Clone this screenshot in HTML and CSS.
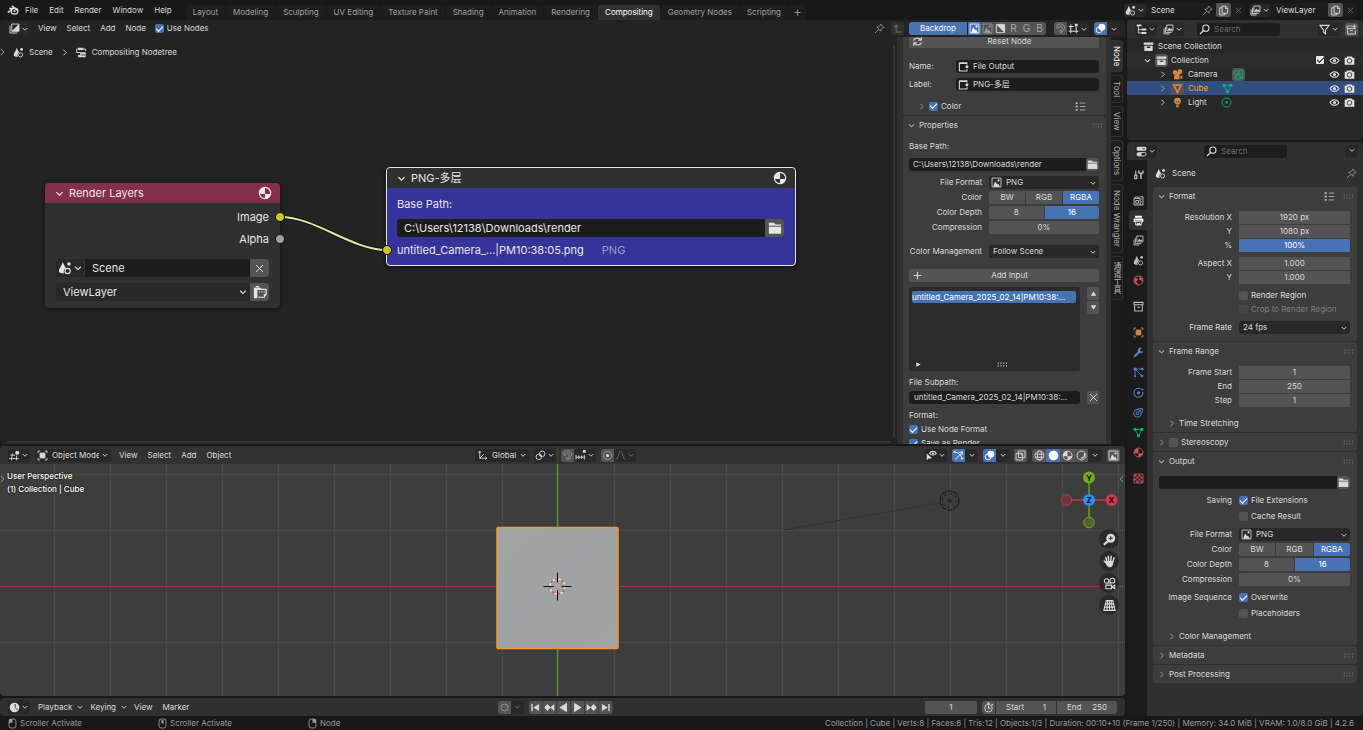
FILE: index.html
```html
<!DOCTYPE html>
<html lang="en">

<head>
    <meta charset="utf-8">
    <meta name="viewport" content="width=device-width,initial-scale=1">
    <title>Blender - Compositing</title>
    <link rel="stylesheet" href="styles.css">
</head>

<body>
    <svg class="sprite" aria-hidden="true">
        <symbol id="blender" viewBox="0 0 16 16"><path d="M1 11.500 8 6H3M6.500 2.500 14 8.500" stroke-width="1.800"/><ellipse cx="10" cy="9.500" rx="4.500" ry="3.800" stroke-width="1.800"/><circle cx="10" cy="9.500" r="1.500" fill="currentColor" stroke="none"/></symbol>
        <symbol id="down" viewBox="0 0 16 16"><path d="m3.500 6 4.500 4.500L12.500 6" stroke-width="1.800"/></symbol>
        <symbol id="right" viewBox="0 0 16 16"><path d="m6 3 5 5-5 5" stroke-width="1.500"/></symbol>
        <symbol id="left" viewBox="0 0 16 16"><path d="M10 3 5 8l5 5"/></symbol>
        <symbol id="plus" viewBox="0 0 16 16"><path d="M8 2.500v11M2.500 8h11" stroke-width="1.500"/></symbol>
        <symbol id="close" viewBox="0 0 16 16"><path d="m3 3 10 10M13 3 3 13" stroke-width="1.400"/></symbol>
        <symbol id="grip" viewBox="0 0 16 16"><path d="M1 6h14M1 10h14" stroke-dasharray="1.500 2.500" stroke-width="1.500"/></symbol>
        <symbol id="compositor" viewBox="0 0 16 16"><path d="M4 1.500h10.500V12H4z"/><path d="M14.500 1.500V12H4z" fill="currentColor" stroke="none"/><path d="M1.500 4v10.500H12"/></symbol>
        <symbol id="scene" viewBox="0 0 16 16"><path d="M5.500 1C4.500 5 1 9 1 11.500c0 2 3 3 6 2.500-1-2-.5-5 2-6C8 6 6.500 4 5.500 1z" fill="currentColor" stroke="none"/><circle cx="11" cy="11.500" r="3"/><circle cx="12.500" cy="3.500" r="2" fill="currentColor" stroke="none"/></symbol>
        <symbol id="nodetree" viewBox="0 0 16 16"><path d="M3 1h8v3.500H3zM6 7.500h8V15H3v-3.500h3z" fill="currentColor" stroke="none"/><path d="M3 3H1v5h5M11 3h3v3"/><path d="M7 11.500h6" class="hole"/></symbol>
        <symbol id="pin" viewBox="0 0 16 16"><path d="m9.500 1.500 5 5-2 .5-2.500 2.500V12L4 6h2.500L9 3.500zM6.500 9.500 1.500 14.500"/></symbol>
        <symbol id="parent" viewBox="0 0 16 16"><path d="M6 3.500V13h7M3 6.500 6 3l3 3.500" stroke-width="1.500"/></symbol>
        <symbol id="copy" viewBox="0 0 16 16"><path d="M6 1.500h5l3 3V12H6zM11 1.500V5h3M6 4H2.500v10.500H10V12"/></symbol>
        <symbol id="layers" viewBox="0 0 16 16"><path d="M5.500 1.500h9v8.500h-9zM3.500 4v8.500h9M1.500 6.500v8h8"/><path d="m6.500 9 2.500-4 2 2.500 1-1.500 2 3z" fill="currentColor" stroke="none"/></symbol>
        <symbol id="outliner" viewBox="0 0 16 16"><path d="M1 2h7M8 8h7M8 13h7" stroke-width="2.800"/><path d="M3.500 3v10H8M3.500 8H8"/></symbol>
        <symbol id="search" viewBox="0 0 16 16"><circle cx="10" cy="6" r="4.500" stroke-width="1.700"/><path d="m6.500 9.500-5 5" stroke-width="1.800"/></symbol>
        <symbol id="filter" viewBox="0 0 16 16"><path d="M1.500 2h13L9.500 8.500v6L6.500 12V8.500z" stroke-width="1.500"/></symbol>
        <symbol id="newcol" viewBox="0 0 16 16"><path d="M9 3H1.500v3.500H14M2.500 6.500v8h11v-5M6 9.500h4M12 .5v6M9 3.500h6"/></symbol>
        <symbol id="box" viewBox="0 0 16 16"><path d="M1 2h14v3.500H1z" fill="currentColor" stroke="none"/><path d="M2 7h12v7.500H2zM5.500 8v2h5V8z" fill="currentColor" fill-rule="evenodd" stroke="none"/></symbol>
        <symbol id="boxline" viewBox="0 0 16 16"><path d="M1.500 2h13v3.500h-13zM2.500 5.500v9h11v-9M6 9h4" stroke-width="1.500"/></symbol>
        <symbol id="eye" viewBox="0 0 16 16"><path d="M1.500 8c3-5.500 10-5.500 13 0-3 5.500-10 5.500-13 0z" stroke-width="1.500"/><circle cx="8" cy="8" r="2.200" fill="currentColor" stroke="none"/></symbol>
        <symbol id="photo" viewBox="0 0 16 16"><path d="M1 4h3V2h8v2h3v10H1z" fill="currentColor" stroke="none"/><circle cx="8" cy="8.500" r="3.300" class="hole"/><circle cx="8" cy="8.500" r="1.500" fill="currentColor" stroke="none"/></symbol>
        <symbol id="movie" viewBox="0 0 16 16"><circle cx="4.500" cy="5" r="3.500" fill="currentColor" stroke="none"/><circle cx="11.500" cy="4" r="3.500" fill="currentColor" stroke="none"/><path d="M3 9h8v6H3zM12 11l3-2v6l-3-2zM4 5h7v5H5z" fill="currentColor" stroke="none"/></symbol>
        <symbol id="movieline" viewBox="0 0 16 16"><circle cx="4.500" cy="5" r="2.800"/><circle cx="11.500" cy="4.500" r="3"/><path d="M6 7.500h4M3.500 10h7v4.500h-7zM11 12l3.500-2v4.500z"/></symbol>
        <symbol id="tri" viewBox="0 0 16 16"><path d="M2.500 3h11L8 13.500z" stroke-width="2.500"/></symbol>
        <symbol id="mesh" viewBox="0 0 16 16"><path d="M3 3.500h10L8 13z" stroke-width="1.400"/><path d="M1 1.500h4v4H1zM11 1.500h4v4h-4zM6 11h4v4H6z" fill="currentColor" stroke="none"/></symbol>
        <symbol id="bulb" viewBox="0 0 16 16"><path d="M8 1a5 5 0 0 0-5 5c0 2 2 3 2.500 5h5c.5-2 2.500-3 2.500-5a5 5 0 0 0-5-5zM6 12h4v3H6z" fill="currentColor" stroke="none"/><path d="m5.500 6 2.500 2 2.500-2" class="hole"/></symbol>
        <symbol id="light" viewBox="0 0 16 16"><circle cx="8" cy="8" r="6.500"/><circle cx="8" cy="8" r="1.800" fill="currentColor" stroke="none"/></symbol>
        <symbol id="outnode" viewBox="0 0 16 16"><path d="M13 5V3H2v11.500h11V12" stroke-width="1.600"/><path d="M2 2h11v2.500H2z" fill="currentColor" stroke="none"/><circle cx="13" cy="8.500" r="2.200" fill="currentColor" stroke="none"/></symbol>
        <symbol id="refresh" viewBox="0 0 16 16"><path d="M2 6.500C4 2 10 1.500 13 5.500M14 9.500c-2 4.500-8 5-11 1M13.500 1.500V6H9M2.500 14.500V10H7" stroke-width="1.500"/></symbol>
        <symbol id="preset" viewBox="0 0 16 16"><path d="M1 3h3M1 8h3M1 13h3" stroke-width="2.600"/><path d="M7 3h8M7 8h8M7 13h8"/></symbol>
        <symbol id="image" viewBox="0 0 16 16"><path d="M1.500 1.500h13v13h-13z" stroke-width="1.200"/><path d="m3 14 3-8 3 5 1-2 3 5z" fill="currentColor" stroke="none"/><circle cx="11" cy="5" r="1.600" fill="currentColor" stroke="none"/></symbol>
        <symbol id="folder" viewBox="0 0 16 16"><path d="M1 2h6l1.500 2H15v1.500H1zM1 6.500h14v8H1z" fill="currentColor" stroke="none"/></symbol>
        <symbol id="ball" viewBox="0 0 16 16"><circle cx="8" cy="8" r="6.500"/><path d="M8 1.500V9H3C1.500 9 1.500 8 1.500 8A6.500 6.500 0 0 1 8 1.500zM8 9h6.400A6.500 6.500 0 0 1 8 14.500z" fill="currentColor" stroke="none"/></symbol>
        <symbol id="tools" viewBox="0 0 16 16"><path d="M4 2v7M2.500 9h3v5h-3z" stroke-width="1.700"/><path d="M8.500 2v3l3 2.500 3-2.500V2M11.500 7v7.500" stroke-width="2.200"/></symbol>
        <symbol id="render" viewBox="0 0 16 16"><path d="M1.500 5h9v9.500h-9zM3 5V3h6v2M10.500 2.500h4v12h-4M4 8h4v4H4zM12 5v1.500M12 9v1.500" stroke-width="1.400"/></symbol>
        <symbol id="printer" viewBox="0 0 16 16"><path d="M3 1h10v3H3zM1 5h14v5h-2V8H3v2H1z" fill="currentColor" stroke="none"/><path d="M4 9h8v5.500H4z"/><path d="m5 14 2-3 1.500 1.500L10 11l1.500 3z" fill="currentColor" stroke="none"/></symbol>
        <symbol id="world" viewBox="0 0 16 16"><circle cx="8" cy="8" r="6.500" stroke-width="1.500"/><path d="M3 4c2 1 3 0 4 2s-3 2-2 4 3 1 3 4c-3 0-6-3-6-6zM9 3c2 0 5 2 5 5-2 2-3-1-5-1z" fill="currentColor" stroke="none"/></symbol>
        <symbol id="object" viewBox="0 0 16 16"><path d="M4.500 4.500h7v7h-7z" fill="currentColor"/><path d="M1.500 4.500v-3h3M11.500 1.500h3v3M14.500 11.500v3h-3M4.500 14.500h-3v-3"/></symbol>
        <symbol id="wrench" viewBox="0 0 16 16"><path d="m2.500 13.500 6-6" stroke-width="3" stroke-linecap="round"/><path d="M13 1.500A4 4 0 1 0 14.800 6L12 6.500 9.800 4.500z" fill="currentColor" stroke="none"/></symbol>
        <symbol id="particles" viewBox="0 0 16 16"><path d="M3 3v11M3 3h11M3 3l10 10"/><path d="M1 1h4v4H1z" fill="currentColor" stroke="none"/><circle cx="13.500" cy="3" r="1.500" fill="currentColor"/><circle cx="13" cy="13" r="1.500" fill="currentColor"/><circle cx="3" cy="13.500" r="1" fill="currentColor"/></symbol>
        <symbol id="physics" viewBox="0 0 16 16"><path d="M11 2.700A6.500 6.500 0 1 0 14.200 7" stroke-width="1.500"/><circle cx="8" cy="8.500" r="2.300" fill="currentColor" stroke="none"/><circle cx="13.500" cy="3.500" r="1.500" fill="currentColor" stroke="none"/></symbol>
        <symbol id="constraint" viewBox="0 0 16 16"><circle cx="6.500" cy="9" r="5.500" stroke-width="1.500"/><circle cx="6.500" cy="9" r="2" stroke-width="1.500"/><path d="M5.500 3.500C9 2.500 11 2 14 2c.5 4-1 7-3 9.500M12 3l-3 4"/></symbol>
        <symbol id="checker" viewBox="0 0 16 16"><path d="M1.500 1.500h13v13h-13z"/><path d="M2 2h3v3H2zM8 2h3v3H8zM5 5h3v3H5zM11 5h3v3h-3zM2 8h3v3H2zM8 8h3v3H8zM5 11h3v3H5zM11 11h3v3h-3z" fill="currentColor" stroke="none"/></symbol>
        <symbol id="props" viewBox="0 0 16 16"><rect x="1" y="1" width="14" height="6" rx="2" fill="currentColor" stroke="none"/><rect x="1.500" y="9.500" width="13" height="5" rx="2"/><path d="M9 4h4" class="hole"/><path d="M2 10h6v4H2z" fill="currentColor" stroke="none"/></symbol>
        <symbol id="view3d" viewBox="0 0 16 16"><path d="M2 7.500h7M0 12.500h14M5 5 3.500 15M11 8v7"/><circle cx="12" cy="4" r="3" fill="currentColor" stroke="none"/></symbol>
        <symbol id="axes" viewBox="0 0 16 16"><path d="M4 2v10h10M4 12l6-6M2 4l2-2.500L6 4M12 10l2.500 2-2.500 2"/></symbol>
        <symbol id="pivot" viewBox="0 0 16 16"><circle cx="5.500" cy="10" r="4"/><circle cx="10.500" cy="5.500" r="4"/><circle cx="8" cy="8" r="1.500" fill="currentColor" stroke="none"/></symbol>
        <symbol id="magnet" viewBox="0 0 16 16"><path d="M3 8 2 5C4 0 13 0 14 6c0 4-3 7-6 8.500l-2-2.500c3-1 5-3 4.500-5.500C10 4 7 4 6 6l-1.500 2zM3.500 5l2 1.500M8 10.500l2 2.500" stroke-width="1.200"/></symbol>
        <symbol id="increment" viewBox="0 0 16 16"><path d="M1 10.500h14M1.500 7v7M5.500 8v5M9.500 8v5M13.500 7v7"/><path d="M11.500 0h4v4h-4z" fill="currentColor" stroke="none"/></symbol>
        <symbol id="snapgrid" viewBox="0 0 16 16"><path d="M4 2v13M12 6v9M1 5h7M1 12h14" stroke-width="1.500"/><path d="M10 1h4v4h-4z" fill="currentColor" stroke="none"/></symbol>
        <symbol id="prop" viewBox="0 0 16 16"><circle cx="8" cy="8" r="6" opacity=".5"/><circle cx="8" cy="8" r="2.200" fill="currentColor" stroke="none"/></symbol>
        <symbol id="falloff" viewBox="0 0 16 16"><path d="M1 14c4-1 4-12 7-12s3 11 7 12"/></symbol>
        <symbol id="visible" viewBox="0 0 16 16"><path d="M5 5c2-4 8-4 10 0-2 3-8 3-10 0z" stroke-width="1.500"/><circle cx="10" cy="5" r="1.500" fill="currentColor" stroke="none"/><path d="M1 5v10l3-2.500 5-.5z" fill="currentColor" stroke="none"/></symbol>
        <symbol id="gizmo" viewBox="0 0 16 16"><path d="M1 3c7 0 11 4 12 11M3 14 13 4M9 3.500l5-1-1 5M1 3l3-2M13 14l2-3"/></symbol>
        <symbol id="overlay" viewBox="0 0 16 16"><circle cx="10" cy="6" r="5" fill="currentColor" stroke="none"/><circle cx="6" cy="10" r="4.300"/><path d="M5.500 8.500a4 4 0 0 0 3 4" stroke="#4772b3"/></symbol>
        <symbol id="xray" viewBox="0 0 16 16"><path d="M5 1.500h9.500V11H5zM1.500 5H11v9.500H1.500zM8 7h4"/></symbol>
        <symbol id="wire" viewBox="0 0 16 16"><circle cx="8" cy="8" r="6.500"/><ellipse cx="8" cy="8" rx="3" ry="6.500"/><path d="M2 6h12M2 10.500h12"/></symbol>
        <symbol id="solid" viewBox="0 0 16 16"><circle cx="8" cy="8" r="7" fill="currentColor" stroke="none"/></symbol>
        <symbol id="rendered" viewBox="0 0 16 16"><circle cx="8" cy="8" r="6.500"/><path d="M12 5c2 4-1 7-5 7" stroke-width="1.800"/></symbol>
        <symbol id="halftone" viewBox="0 0 16 16"><path d="M2 2h12v12H2z"/><path d="M2 2h12v12z" fill="currentColor" stroke="none"/></symbol>
        <symbol id="zoomin" viewBox="0 0 16 16"><circle cx="9.500" cy="6.500" r="5.500" fill="currentColor" stroke="none"/><path d="m6 10-5 4.500" stroke-width="2.600"/><path d="M9.500 4v5M7 6.500h5" class="hole"/></symbol>
        <symbol id="hand" viewBox="0 0 16 16"><path d="M4.500 8 3.500 3M7 7.500 6.500 1.500M9.500 7.500l.5-6M12 8.500l1.500-5M4.500 10 1.500 7.500" stroke-width="1.800" stroke-linecap="round"/><path d="M3.500 7.500h9V11c-.5 2.500-2 4-4 4-2.500 0-4-2-5-4z" fill="currentColor" stroke="none"/></symbol>
        <symbol id="persp" viewBox="0 0 16 16"><path d="M4 2h8l3 12H1zM8 2v12M6 2 4.500 14M10 2l1.500 12M3 6h10M2 10h12" stroke-width="1.300"/></symbol>
        <symbol id="clock" viewBox="0 0 16 16"><circle cx="8" cy="8" r="7" fill="currentColor" stroke="none"/><path d="M9 3v5l3 3.500" class="hole"/></symbol>
        <symbol id="record" viewBox="0 0 16 16"><circle cx="8" cy="8" r="5"/></symbol>
        <symbol id="tostart" viewBox="0 0 16 16"><path d="M2 3h2v10H2zM13 3v10L5 8z" fill="currentColor" stroke="none"/></symbol>
        <symbol id="prevkey" viewBox="0 0 16 16"><path d="m5 3 4.500 5L5 13 .5 8zM15 3v10L9 8z" fill="currentColor" stroke="none"/></symbol>
        <symbol id="playback" viewBox="0 0 16 16"><path d="M13 1v14L2 8z" fill="currentColor" stroke="none"/></symbol>
        <symbol id="play" viewBox="0 0 16 16"><path d="M3 1v14l11-7z" fill="currentColor" stroke="none"/></symbol>
        <symbol id="nextkey" viewBox="0 0 16 16"><path d="m11 3 4.500 5L11 13 6.500 8zM1 3v10l6-5z" fill="currentColor" stroke="none"/></symbol>
        <symbol id="toend" viewBox="0 0 16 16"><path d="M12 3h2v10h-2zM3 3v10l8-5z" fill="currentColor" stroke="none"/></symbol>
        <symbol id="stopwatch" viewBox="0 0 16 16"><circle cx="8" cy="9" r="5.500"/><path d="M8 5.500V9h3M6 1.500h4M8 1.500v2M13 3l1.500 1.500" stroke-width="1.500"/></symbol>
        <symbol id="mousel" viewBox="0 0 16 16"><rect x="3" y="1.500" width="10" height="13" rx="3"/><path d="M3 1.500h5V7H3z" fill="currentColor" stroke="none"/></symbol>
        <symbol id="mousem" viewBox="0 0 16 16"><rect x="3" y="1.500" width="10" height="13" rx="3"/><path d="M6.500 3h3v5h-3z" fill="currentColor" stroke="none"/></symbol>
        <symbol id="mouser" viewBox="0 0 16 16"><rect x="3" y="1.500" width="10" height="13" rx="3"/><path d="M8 1.500h5V7H8z" fill="currentColor" stroke="none"/></symbol>
        <symbol id="rerender" viewBox="0 0 16 16"><path d="M1 4h4v11H1zM3 1h4v1.500H3zM1 3h8v1.500H1z" fill="currentColor" stroke="none"/><path d="M5 5h10v6l-2 1.500V14H6M13 14v-3h2"/><path d="M7 8h7" stroke-dasharray="1 1"/></symbol>
        <symbol id="triup" viewBox="0 0 16 16"><path d="M8 4l5 8H3z" fill="currentColor" stroke="none"/></symbol>
        <symbol id="tridown" viewBox="0 0 16 16"><path d="M8 12 3 4h10z" fill="currentColor" stroke="none"/></symbol>
        <symbol id="triright" viewBox="0 0 16 16"><path d="M4 4v8l8-4z" fill="currentColor" stroke="none"/></symbol>
    </svg>

    <header class="topbar">
        <svg class="icon logo"><use href="#blender"/></svg>
        <nav class="menus">
            <button>File</button><button>Edit</button><button>Render</button><button>Window</button><button>Help</button>
        </nav>
        <nav class="workspaces">
            <button>Layout</button><button>Modeling</button><button>Sculpting</button><button>UV Editing</button><button>Texture Paint</button><button>Shading</button><button>Animation</button><button>Rendering</button><button class="active">Compositing</button><button>Geometry Nodes</button><button>Scripting</button><button class="add" aria-label="Add workspace"><svg class="icon small"><use href="#plus"/></svg></button>
        </nav>
        <div class="datablock">
            <button class="type" aria-label="Browse scene"><svg class="icon"><use href="#scene"/></svg><svg class="icon chev"><use href="#down"/></svg></button>
            <input class="scene-name" type="text" value="Scene" aria-label="Scene name">
            <svg class="icon dim"><use href="#pin"/></svg>
            <button class="raised" aria-label="New scene"><svg class="icon"><use href="#copy"/></svg></button>
            <button class="off" aria-label="Remove scene"><svg class="icon small"><use href="#close"/></svg></button>
        </div>
        <div class="datablock">
            <button class="type" aria-label="Browse view layer"><svg class="icon"><use href="#layers"/></svg><svg class="icon chev"><use href="#down"/></svg></button>
            <input class="layer-name" type="text" value="ViewLayer" aria-label="View layer name">
            <button class="raised" aria-label="New view layer"><svg class="icon"><use href="#copy"/></svg></button>
            <button class="off" aria-label="Remove view layer"><svg class="icon small"><use href="#close"/></svg></button>
        </div>
    </header>

    <main class="screen">
        <div class="left">

            <!-- compositor -->
            <section class="area node-editor">
                <div class="header">
                    <button class="type" aria-label="Editor type"><svg class="icon"><use href="#compositor"/></svg><svg class="icon chev"><use href="#down"/></svg></button>
                    <nav class="menus"><button>View</button><button>Select</button><button>Add</button><button>Node</button></nav>
                    <label class="check"><input type="checkbox" checked>Use Nodes</label>
                    <span class="fill"></span>
                    <svg class="icon dim pin"><use href="#pin"/></svg>
                    <button class="raised off" aria-label="Parent node tree"><svg class="icon"><use href="#parent"/></svg></button>
                    <div class="joined channels">
                        <button class="on backdrop">Backdrop</button>
                        <button class="on" aria-label="Color and alpha"><svg class="icon"><use href="#image"/></svg></button>
                        <button class="dim" aria-label="Color"><svg class="icon"><use href="#image"/></svg></button>
                        <button aria-label="Alpha"><svg class="icon"><use href="#halftone"/></svg></button>
                        <button class="channel">R</button><button class="channel">G</button><button class="channel">B</button>
                    </div>
                    <div class="joined">
                        <button class="dim" aria-label="Snap"><svg class="icon"><use href="#magnet"/></svg></button>
                        <button class="type" aria-label="Snap to"><svg class="icon"><use href="#snapgrid"/></svg><svg class="icon chev"><use href="#down"/></svg></button>
                    </div>
                    <div class="joined">
                        <button class="on" aria-label="Overlays"><svg class="icon"><use href="#overlay"/></svg></button>
                        <button class="flat" aria-label="Overlay options"><svg class="icon chev"><use href="#down"/></svg></button>
                    </div>
                </div>
                <div class="node-body">
                    <div class="canvas">
                        <svg class="icon region-open"><use href="#right"/></svg>
                        <div class="crumbs">
                            <svg class="icon"><use href="#scene"/></svg>Scene
                            <svg class="icon small"><use href="#right"/></svg>
                            <svg class="icon"><use href="#nodetree"/></svg>Compositing Nodetree
                        </div>
                        <article class="node render-layers">
                            <h2><svg class="icon"><use href="#down"/></svg>Render Layers<svg class="icon big"><use href="#ball"/></svg></h2>
                            <p class="socket out">Image</p>
                            <p class="socket out">Alpha</p>
                            <div class="node-fields">
                                <div class="field">
                                    <button class="type" aria-label="Browse scene"><svg class="icon big"><use href="#scene"/></svg><svg class="icon chev"><use href="#down"/></svg></button>
                                    <input type="text" value="Scene" aria-label="Scene">
                                    <button class="raised" aria-label="Unlink"><svg class="icon"><use href="#close"/></svg></button>
                                </div>
                                <div class="field dark">
                                    <select aria-label="Layer"><option>ViewLayer</option></select>
                                    <svg class="icon chev"><use href="#down"/></svg>
                                    <button class="raised" aria-label="Render layer"><svg class="icon big"><use href="#rerender"/></svg></button>
                                </div>
                            </div>
                        </article>
                        <article class="node file-output">
                            <h2><svg class="icon"><use href="#down"/></svg>PNG-多层<svg class="icon big"><use href="#ball"/></svg></h2>
                            <label for="node-path">Base Path:</label>
                            <div class="field">
                                <input id="node-path" type="text" value="C:\Users\12138\Downloads\render">
                                <button class="raised" aria-label="Browse"><svg class="icon big"><use href="#folder"/></svg></button>
                            </div>
                            <p class="socket in">untitled_Camera_...|PM10:38:05.png<span>PNG</span></p>
                        </article>
                        <svg class="links" width="1" height="1">
                            <path d="M280 180C316 180 351 213 387 213" class="link-edge"/>
                            <path d="M280 180C316 180 351 213 387 213" class="link"/>
                            <circle cx="280" cy="180" r="4.500" class="color"/>
                            <circle cx="280" cy="202" r="4.500" class="value"/>
                            <circle cx="387" cy="213" r="4.500" class="color"/>
                        </svg>
                        <span class="scroll-x"></span>
                        <span class="scroll-y"></span>
                    </div>
                    <aside class="sidebar">
                        <div class="panel scrolled">
                            <div class="body">
                                <button class="wide"><svg class="icon"><use href="#refresh"/></svg>Reset Node</button>
                                <div class="row name"><label for="n-name">Name:</label><span class="field"><svg class="icon"><use href="#outnode"/></svg><input id="n-name" type="text" value="File Output"></span></div>
                                <div class="row name"><label for="n-label">Label:</label><span class="field"><svg class="icon"><use href="#outnode"/></svg><input id="n-label" type="text" value="PNG-多层"></span></div>
                            </div>
                            <div class="sub"><svg class="icon small"><use href="#right"/></svg><label class="check"><input type="checkbox" checked>Color</label><svg class="icon tail"><use href="#preset"/></svg></div>
                        </div>
                        <div class="panel">
                            <h3><svg class="icon small"><use href="#down"/></svg>Properties<svg class="icon grip"><use href="#grip"/></svg></h3>
                            <div class="body">
                                <label class="line" for="s-path">Base Path:</label>
                                <div class="field"><input id="s-path" type="text" value="C:\Users\12138\Downloads\render"><button class="raised" aria-label="Browse"><svg class="icon"><use href="#folder"/></svg></button></div>
                                <div class="group">
                                    <div class="row"><label for="s-format">File Format</label><span class="field dark"><svg class="icon"><use href="#image"/></svg><select id="s-format"><option>PNG</option></select><svg class="icon chev"><use href="#down"/></svg></span></div>
                                    <div class="row"><span>Color</span><span class="seg"><label><input type="radio" name="s-color">BW</label><label><input type="radio" name="s-color">RGB</label><label><input type="radio" name="s-color" checked>RGBA</label></span></div>
                                    <div class="row"><span>Color Depth</span><span class="seg"><label><input type="radio" name="s-depth">8</label><label><input type="radio" name="s-depth" checked>16</label></span></div>
                                    <div class="row"><label for="s-comp">Compression</label><input id="s-comp" class="num" type="text" value="0%"></div>
                                </div>
                                <div class="row break"><label for="s-cm">Color Management</label><span class="field dark"><select id="s-cm"><option>Follow Scene</option></select><svg class="icon chev"><use href="#down"/></svg></span></div>
                                <button class="wide break"><svg class="icon"><use href="#plus"/></svg>Add Input</button>
                                <div class="slots">
                                    <div class="list">
                                        <button class="item">untitled_Camera_2025_02_14|PM10:38:...</button>
                                        <div class="list-foot"><svg class="icon small"><use href="#triright"/></svg><svg class="icon"><use href="#grip"/></svg></div>
                                    </div>
                                    <div class="movers"><button aria-label="Move up"><svg class="icon"><use href="#triup"/></svg></button><button aria-label="Move down"><svg class="icon"><use href="#tridown"/></svg></button></div>
                                </div>
                                <div class="group">
                                    <label class="line" for="s-sub">File Subpath:</label>
                                    <div class="split"><input id="s-sub" class="text" type="text" value="untitled_Camera_2025_02_14|PM10:38:..."><button class="raised" aria-label="Remove input"><svg class="icon"><use href="#close"/></svg></button></div>
                                </div>
                                <div class="group tight">
                                    <span class="line">Format:</span>
                                    <label class="check"><input type="checkbox" checked>Use Node Format</label>
                                    <label class="check"><input type="checkbox" checked>Save as Render</label>
                                </div>
                            </div>
                        </div>
                    </aside>
                    <nav class="side-tabs">
                        <button class="active">Node</button><button>Tool</button><button>View</button><button>Options</button><button>Node Wrangler</button><button>通道工具</button>
                    </nav>
                </div>
            </section>

            <!-- 3D viewport -->
            <section class="area viewport">
                <svg class="world" viewBox="0 0 1125 250" preserveAspectRatio="xMidYMid slice">
                    <defs>
                        <pattern id="grid" x="54" y="28" width="56" height="56" patternUnits="userSpaceOnUse"><path d="M0 .5h56M.5 0v56" stroke="#494949"/></pattern>
                        <linearGradient id="face" x1="0" y1="0" x2="1" y2="1"><stop offset="0" stop-color="#a3a5a5"/><stop offset=".5" stop-color="#9fa2a2"/><stop offset="1" stop-color="#a3a4a4"/></linearGradient>
                    </defs>
                    <rect width="1125" height="250" fill="#3d3d3d"/>
                    <rect width="1125" height="250" fill="url(#grid)"/>
                    <path d="M0 140.500h1125" stroke="#9b3347"/>
                    <path d="M557.500 0v250" stroke="#5d8a26" stroke-width="1.500"/>
                    <rect x="497" y="81.500" width="121" height="121" rx="1" fill="url(#face)" stroke="#f5962d" stroke-width="1.500"/>
                    <circle cx="557.500" cy="140.500" r="7.500" class="cursor-white"/>
                    <circle cx="557.500" cy="140.500" r="7.500" class="cursor-red"/>
                    <path d="M557.500 126.500v10M557.500 144.500v10M543.500 140.500h10M561.500 140.500h10" stroke="#111"/>
                    <circle cx="557.500" cy="140.500" r="1.500" fill="#f7a23b"/>
                    <g fill="none" stroke="#151515">
                        <circle cx="949.500" cy="54.500" r="9.500" stroke-dasharray="5 1"/>
                        <circle cx="949.500" cy="54.500" r="7" stroke-dasharray="2 3.500"/>
                        <circle cx="949.500" cy="54.500" r="1.500"/>
                        <path d="m939 57-155 27" stroke="#333"/>
                    </g>
                </svg>
                <div class="header">
                    <div class="start">
                        <button class="type" aria-label="Editor type"><svg class="icon"><use href="#view3d"/></svg><svg class="icon chev"><use href="#down"/></svg></button>
                        <span class="field dark mode"><svg class="icon"><use href="#object"/></svg><select aria-label="Mode"><option>Object Mode</option></select><svg class="icon chev"><use href="#down"/></svg></span>
                        <nav class="menus"><button>View</button><button>Select</button><button>Add</button><button>Object</button></nav>
                    </div>
                    <span class="field dark orient"><svg class="icon"><use href="#axes"/></svg><select aria-label="Orientation"><option>Global</option></select><svg class="icon chev"><use href="#down"/></svg></span>
                    <button class="type" aria-label="Pivot point"><svg class="icon"><use href="#pivot"/></svg><svg class="icon chev"><use href="#down"/></svg></button>
                    <div class="joined">
                        <button class="dim" aria-label="Snap"><svg class="icon"><use href="#magnet"/></svg></button>
                        <button class="type" aria-label="Snap to"><svg class="icon"><use href="#increment"/></svg><svg class="icon chev"><use href="#down"/></svg></button>
                    </div>
                    <div class="joined">
                        <button aria-label="Proportional editing"><svg class="icon"><use href="#prop"/></svg></button>
                        <button class="type off" aria-label="Falloff"><svg class="icon"><use href="#falloff"/></svg><svg class="icon chev"><use href="#down"/></svg></button>
                    </div>
                    <span class="fill"></span>
                    <button class="type" aria-label="Object types"><svg class="icon"><use href="#visible"/></svg><svg class="icon chev"><use href="#down"/></svg></button>
                    <div class="joined">
                        <button class="on" aria-label="Gizmos"><svg class="icon"><use href="#gizmo"/></svg></button>
                        <button class="flat" aria-label="Gizmo options"><svg class="icon chev"><use href="#down"/></svg></button>
                    </div>
                    <div class="joined">
                        <button class="on" aria-label="Overlays"><svg class="icon"><use href="#overlay"/></svg></button>
                        <button class="flat" aria-label="Overlay options"><svg class="icon chev"><use href="#down"/></svg></button>
                    </div>
                    <button class="raised" aria-label="X-ray"><svg class="icon"><use href="#xray"/></svg></button>
                    <div class="joined shading">
                        <button aria-label="Wireframe"><svg class="icon"><use href="#wire"/></svg></button>
                        <button class="on" aria-label="Solid"><svg class="icon"><use href="#solid"/></svg></button>
                        <button aria-label="Material preview"><svg class="icon"><use href="#ball"/></svg></button>
                        <button aria-label="Rendered"><svg class="icon"><use href="#rendered"/></svg></button>
                        <button class="flat" aria-label="Shading options"><svg class="icon chev"><use href="#down"/></svg></button>
                    </div>
                    <button class="raised" aria-label="Render preview"><svg class="icon"><use href="#image"/></svg></button>
                </div>
                <svg class="icon region-open"><use href="#right"/></svg>
                <svg class="icon region-close"><use href="#left"/></svg>
                <p class="stats">User Perspective<br>(1) Collection | Cube</p>
                <svg class="nav-gizmo" viewBox="0 0 60 60">
                    <path d="M7 30h46" stroke="#c9354d" stroke-width="1.500"/>
                    <path d="M30 7v46" stroke="#6d9f1d" stroke-width="1.500"/>
                    <circle cx="7.500" cy="30" r="5.300" fill="#6c3640" stroke="#c9354d"/>
                    <circle cx="30" cy="52.500" r="5.300" fill="#4e632a" stroke="#72a51e"/>
                    <circle cx="52.500" cy="30" r="6" fill="#d2374f"/>
                    <circle cx="30" cy="7.500" r="6" fill="#73aa17"/>
                    <circle cx="30" cy="30" r="6" fill="#2c8ff5"/>
                    <text x="52.500" y="33">X</text>
                    <text x="30" y="10.500">Y</text>
                    <text x="30" y="33">Z</text>
                </svg>
                <div class="nav-buttons">
                    <button aria-label="Zoom"><svg class="icon"><use href="#zoomin"/></svg></button>
                    <button aria-label="Pan"><svg class="icon"><use href="#hand"/></svg></button>
                    <button aria-label="Camera view"><svg class="icon"><use href="#movieline"/></svg></button>
                    <button aria-label="Perspective"><svg class="icon"><use href="#persp"/></svg></button>
                </div>
            </section>

            <section class="area timeline">
                <div class="header">
                    <div class="start">
                        <button class="type" aria-label="Editor type"><svg class="icon"><use href="#clock"/></svg><svg class="icon chev"><use href="#down"/></svg></button>
                        <nav class="menus"><button>Playback<svg class="icon chev"><use href="#down"/></svg></button><button>Keying<svg class="icon chev"><use href="#down"/></svg></button><button>View</button><button>Marker</button></nav>
                    </div>
                    <div class="joined">
                        <button class="dim" aria-label="Auto keying"><svg class="icon"><use href="#record"/></svg></button>
                        <button class="flat off" aria-label="Auto keying options"><svg class="icon chev"><use href="#down"/></svg></button>
                    </div>
                    <div class="joined transport">
                        <button aria-label="Jump to start"><svg class="icon"><use href="#tostart"/></svg></button>
                        <button aria-label="Previous keyframe"><svg class="icon"><use href="#prevkey"/></svg></button>
                        <button aria-label="Play reversed"><svg class="icon"><use href="#playback"/></svg></button>
                        <button aria-label="Play"><svg class="icon"><use href="#play"/></svg></button>
                        <button aria-label="Next keyframe"><svg class="icon"><use href="#nextkey"/></svg></button>
                        <button aria-label="Jump to end"><svg class="icon"><use href="#toend"/></svg></button>
                    </div>
                    <span class="fill"></span>
                    <input class="num frame" type="text" value="1" aria-label="Current frame">
                    <div class="joined">
                        <button aria-label="Preview range"><svg class="icon"><use href="#stopwatch"/></svg></button>
                        <label class="range">Start<input type="text" value="1"></label>
                        <label class="range">End<input type="text" value="250"></label>
                    </div>
                </div>
            </section>
        </div>

        <div class="right">
            <section class="area outliner">
                <div class="header">
                    <button class="type" aria-label="Editor type"><svg class="icon"><use href="#outliner"/></svg><svg class="icon chev"><use href="#down"/></svg></button>
                    <button class="type" aria-label="Display mode"><svg class="icon"><use href="#layers"/></svg><svg class="icon chev"><use href="#down"/></svg></button>
                    <label class="search"><svg class="icon"><use href="#search"/></svg><input type="text" placeholder="Search" aria-label="Search outliner"></label>
                    <span class="fill"></span>
                    <button class="type" aria-label="Filter"><svg class="icon"><use href="#filter"/></svg><svg class="icon chev"><use href="#down"/></svg></button>
                    <button class="raised" aria-label="New collection"><svg class="icon"><use href="#newcol"/></svg></button>
                </div>
                <ul class="tree">
                    <li class="root"><svg class="icon"><use href="#box"/></svg>Scene Collection</li>
                    <li class="branch"><svg class="icon small"><use href="#down"/></svg><svg class="icon lit"><use href="#box"/></svg>Collection
                        <span class="toggles"><input class="mark" type="checkbox" checked aria-label="Enable collection"><svg class="icon"><use href="#eye"/></svg><svg class="icon"><use href="#photo"/></svg></span></li>
                    <li class="leaf"><svg class="icon small"><use href="#right"/></svg><svg class="icon orange"><use href="#movie"/></svg>Camera<svg class="icon green data lit"><use href="#movieline"/></svg>
                        <span class="toggles"><svg class="icon"><use href="#eye"/></svg><svg class="icon"><use href="#photo"/></svg></span></li>
                    <li class="leaf selected"><svg class="icon small"><use href="#right"/></svg><svg class="icon orange lit"><use href="#tri"/></svg>Cube<svg class="icon green data"><use href="#mesh"/></svg>
                        <span class="toggles"><svg class="icon"><use href="#eye"/></svg><svg class="icon"><use href="#photo"/></svg></span></li>
                    <li class="leaf"><svg class="icon small"><use href="#right"/></svg><svg class="icon orange"><use href="#bulb"/></svg>Light<svg class="icon green data"><use href="#light"/></svg>
                        <span class="toggles"><svg class="icon"><use href="#eye"/></svg><svg class="icon"><use href="#photo"/></svg></span></li>
                </ul>
            </section>

            <section class="area properties">
                <div class="header">
                    <button class="type" aria-label="Editor type"><svg class="icon"><use href="#props"/></svg><svg class="icon chev"><use href="#down"/></svg></button>
                    <label class="search"><svg class="icon"><use href="#search"/></svg><input type="text" placeholder="Search" aria-label="Search properties"></label>
                    <button class="flat" aria-label="Options"><svg class="icon chev"><use href="#down"/></svg></button>
                </div>
                <div class="props-body">
                    <nav class="prop-tabs">
                        <button aria-label="Tool"><svg class="icon"><use href="#tools"/></svg></button>
                        <button class="apart" aria-label="Render"><svg class="icon"><use href="#render"/></svg></button>
                        <button class="active" aria-label="Output"><svg class="icon"><use href="#printer"/></svg></button>
                        <button aria-label="View layer"><svg class="icon"><use href="#layers"/></svg></button>
                        <button aria-label="Scene"><svg class="icon"><use href="#scene"/></svg></button>
                        <button class="red" aria-label="World"><svg class="icon"><use href="#world"/></svg></button>
                        <button class="apart" aria-label="Collection"><svg class="icon"><use href="#boxline"/></svg></button>
                        <button class="apart orange" aria-label="Object"><svg class="icon"><use href="#object"/></svg></button>
                        <button class="blue" aria-label="Modifiers"><svg class="icon"><use href="#wrench"/></svg></button>
                        <button class="blue" aria-label="Particles"><svg class="icon"><use href="#particles"/></svg></button>
                        <button class="blue" aria-label="Physics"><svg class="icon"><use href="#physics"/></svg></button>
                        <button class="blue" aria-label="Constraints"><svg class="icon"><use href="#constraint"/></svg></button>
                        <button class="green" aria-label="Data"><svg class="icon"><use href="#mesh"/></svg></button>
                        <button class="red" aria-label="Material"><svg class="icon"><use href="#ball"/></svg></button>
                        <button class="apart red" aria-label="Texture"><svg class="icon"><use href="#checker"/></svg></button>
                    </nav>
                    <div class="props-main">
                        <div class="context"><svg class="icon"><use href="#scene"/></svg>Scene<svg class="icon dim"><use href="#pin"/></svg></div>
                        <div class="panel">
                            <h3><svg class="icon small"><use href="#down"/></svg>Format<svg class="icon tail"><use href="#preset"/></svg><svg class="icon grip"><use href="#grip"/></svg></h3>
                            <div class="body">
                                <div class="group tight">
                                    <div class="row"><label for="res-x">Resolution X</label><input id="res-x" class="num" type="text" value="1920 px"></div>
                                    <div class="row"><label for="res-y">Y</label><input id="res-y" class="num" type="text" value="1080 px"></div>
                                    <div class="row"><label for="res-p">%</label><input id="res-p" class="num on" type="text" value="100%"></div>
                                </div>
                                <div class="group tight">
                                    <div class="row"><label for="asp-x">Aspect X</label><input id="asp-x" class="num" type="text" value="1.000"></div>
                                    <div class="row"><label for="asp-y">Y</label><input id="asp-y" class="num" type="text" value="1.000"></div>
                                </div>
                                <div class="group tight">
                                    <div class="row"><span></span><label class="check"><input type="checkbox">Render Region</label></div>
                                    <div class="row"><span></span><label class="check disabled"><input type="checkbox" disabled>Crop to Render Region</label></div>
                                </div>
                                <div class="row"><label for="fps">Frame Rate</label><span class="field dark"><select id="fps"><option>24 fps</option></select><svg class="icon chev"><use href="#down"/></svg></span></div>
                            </div>
                        </div>
                        <div class="panel">
                            <h3><svg class="icon small"><use href="#down"/></svg>Frame Range<svg class="icon grip"><use href="#grip"/></svg></h3>
                            <div class="body">
                                <div class="group tight">
                                    <div class="row"><label for="f-start">Frame Start</label><input id="f-start" class="num" type="text" value="1"></div>
                                    <div class="row"><label for="f-end">End</label><input id="f-end" class="num" type="text" value="250"></div>
                                    <div class="row"><label for="f-step">Step</label><input id="f-step" class="num" type="text" value="1"></div>
                                </div>
                            </div>
                            <div class="sub"><svg class="icon small"><use href="#right"/></svg>Time Stretching</div>
                        </div>
                        <div class="panel">
                            <h3><svg class="icon small"><use href="#right"/></svg><label class="check"><input type="checkbox">Stereoscopy</label><svg class="icon grip"><use href="#grip"/></svg></h3>
                        </div>
                        <div class="panel">
                            <h3><svg class="icon small"><use href="#down"/></svg>Output<svg class="icon grip"><use href="#grip"/></svg></h3>
                            <div class="body">
                                <div class="field"><input type="text" value="" aria-label="Output path"><button class="raised" aria-label="Browse"><svg class="icon"><use href="#folder"/></svg></button></div>
                                <div class="group loose">
                                    <div class="row"><span>Saving</span><label class="check"><input type="checkbox" checked>File Extensions</label></div>
                                    <div class="row"><span></span><label class="check"><input type="checkbox">Cache Result</label></div>
                                </div>
                                <div class="group">
                                    <div class="row"><label for="o-format">File Format</label><span class="field dark"><svg class="icon"><use href="#image"/></svg><select id="o-format"><option>PNG</option></select><svg class="icon chev"><use href="#down"/></svg></span></div>
                                    <div class="row"><span>Color</span><span class="seg"><label><input type="radio" name="o-color">BW</label><label><input type="radio" name="o-color">RGB</label><label><input type="radio" name="o-color" checked>RGBA</label></span></div>
                                    <div class="row"><span>Color Depth</span><span class="seg"><label><input type="radio" name="o-depth">8</label><label><input type="radio" name="o-depth" checked>16</label></span></div>
                                    <div class="row"><label for="o-comp">Compression</label><input id="o-comp" class="num" type="text" value="0%"></div>
                                </div>
                                <div class="group loose">
                                    <div class="row"><span>Image Sequence</span><label class="check"><input type="checkbox" checked>Overwrite</label></div>
                                    <div class="row"><span></span><label class="check"><input type="checkbox">Placeholders</label></div>
                                </div>
                            </div>
                            <div class="sub"><svg class="icon small"><use href="#right"/></svg>Color Management</div>
                        </div>
                        <div class="panel"><h3><svg class="icon small"><use href="#right"/></svg>Metadata<svg class="icon grip"><use href="#grip"/></svg></h3></div>
                        <div class="panel"><h3><svg class="icon small"><use href="#right"/></svg>Post Processing<svg class="icon grip"><use href="#grip"/></svg></h3></div>
                    </div>
                </div>
            </section>
        </div>
    </main>

    <footer class="status">
        <span class="hint"><svg class="icon"><use href="#mousel"/></svg>Scroller Activate</span>
        <span class="hint"><svg class="icon"><use href="#mousem"/></svg>Scroller Activate</span>
        <span class="hint"><svg class="icon"><use href="#mouser"/></svg>Node</span>
        <span class="info">Collection | Cube | Verts:8 | Faces:6 | Tris:12 | Objects:1/3 | Duration: 00:10+10 (Frame 1/250) | Memory: 34.0 MiB | VRAM: 1.0/8.0 GiB | 4.2.6</span>
    </footer>
</body>

</html>
```
FILE: styles.css
```css
* {
    box-sizing: border-box;
}

body {
    display: flex;
    flex-direction: column;
    height: 100vh;
    margin: 0;
    overflow: hidden;
    background: #181818;
    color: #dadada;
    font-family: Inter, "Noto Sans CJK SC", sans-serif;
    font-size: 8px;
    line-height: 13px;
    white-space: nowrap;
}

button,
input,
select {
    margin: 0;
    padding: 0;
    border: 0;
    border-radius: 0;
    background: none;
    color: inherit;
    font: inherit;
    appearance: none;
    outline: 0;
}

input,
select {
    min-width: 0;
}

h2,
h3,
p,
ul {
    margin: 0;
    padding: 0;
    font-size: inherit;
    font-weight: 400;
    list-style: none;
}

.sprite {
    position: absolute;
    width: 0;
    height: 0;
}

.icon {
    flex: none;
    width: 11px;
    height: 11px;
    fill: none;
    stroke: currentColor;
    stroke-width: 1.3;
}

.icon.small {
    width: 9px;
    height: 9px;
}

.icon.big {
    width: 14px;
    height: 14px;
}

.icon.chev {
    width: 8px;
    height: 8px;
}

.hole {
    stroke: #303030;
}

.dim {
    color: #9a9a9a;
}

.off {
    color: #6c6c6c;
}

.orange {
    color: #d58744;
}

.red {
    color: #c4535e;
}

.blue {
    color: #5680c8;
}

.green {
    color: #00b386;
}

.fill {
    flex: 1;
}

/* top bar */
.topbar {
    display: flex;
    align-items: center;
    height: 20px;
    padding: 0 6px 0 7px;
}

.topbar .logo {
    width: 12px;
    height: 12px;
    margin-right: 6px;
}

.menus {
    display: flex;
    align-items: center;
    gap: 10px;
}

.topbar .menus {
    gap: 11px;
}

.menus button {
    display: flex;
    align-items: center;
}

.workspaces {
    display: flex;
    flex: 1;
    align-self: flex-end;
    gap: 1px;
    margin-left: 14px;
    color: #a0a0a0;
}

.workspaces button {
    height: 15px;
    padding: 0 7px;
    border-radius: 3px 3px 0 0;
    background: #1d1d1d;
}

.workspaces .add {
    padding: 0 4px;
}

.workspaces button .icon {
    display: block;
}

.workspaces .active {
    background: #303030;
    color: #fff;
}

.datablock {
    display: flex;
    align-items: center;
    height: 14px;
    margin-left: 4px;
    border-radius: 3px;
    background: #1d1d1d;
}

.datablock input {
    padding-left: 5px;
}

.datablock .raised {
    width: 15px;
    height: 14px;
}

.datablock .dim {
    margin-right: 3px;
}

.scene-name {
    width: 56px;
}

.layer-name {
    width: 57px;
}

.datablock .off {
    width: 14px;
    height: 9px;
}

/* buttons shared by all headers */
.type {
    display: flex;
    align-items: center;
    justify-content: center;
    gap: 1px;
    height: 13px;
    padding: 0 1px;
    border-radius: 3px;
    background: #282828;
}

.raised,
.joined button {
    display: flex;
    align-items: center;
    justify-content: center;
    height: 13px;
    padding: 0 1px;
    background: #545454;
}

.raised {
    border-radius: 2px;
}

.raised.off {
    background: #303030;
}

.joined {
    display: flex;
    overflow: hidden;
    border-radius: 3px;
}

.joined .type,
.joined .flat,
.flat {
    background: #282828;
}

.flat {
    width: 13px;
    height: 13px;
    padding: 0 2px;
    border-radius: 3px;
}

.joined .on,
.num.on {
    background: #4772b3;
    color: #fff;
}

.joined .off {
    color: #6c6c6c;
}

/* areas */
.screen {
    display: flex;
    flex: 1;
    gap: 2px;
    min-height: 0;
}

.left,
.right {
    display: flex;
    flex-direction: column;
    gap: 2px;
}

.left {
    flex: 1;
    min-width: 0;
}

.right {
    width: 236px;
}

.area {
    display: flex;
    flex-direction: column;
    min-height: 0;
    overflow: hidden;
    border-radius: 4px;
    background: #303030;
}

.header {
    display: flex;
    flex: none;
    align-items: center;
    gap: 5px;
    height: 18px;
    padding: 0 5px 0 8px;
}

.header .menus {
    margin-left: 3px;
}

/* compositor */
.node-editor {
    flex: 424 1 0;
    background: #232323;
}

.node-editor .header {
    height: 17px;
}

.node-editor .header .check {
    margin-left: 4px;
}

.pin {
    margin-right: 1px;
}

.channels {
    margin-right: 3px;
}

.backdrop {
    width: 58px;
}

.joined .backdrop {
    margin-right: 1px;
}

.joined .channel {
    width: 13px;
    color: #a8a8a8;
    font-size: 10px;
}

.node-body {
    display: flex;
    flex: 1;
    min-height: 0;
}

.canvas {
    position: relative;
    flex: 1;
    min-width: 0;
    overflow: hidden;
}

.crumbs {
    display: flex;
    align-items: center;
    gap: 5px;
    padding: 9px 0 0 13px;
}

.crumbs .small {
    margin: 0 2px;
}

.region-open,
.region-close {
    position: absolute;
    top: 10px;
    left: -3px;
    width: 10px;
    height: 10px;
    color: #aaa;
}

.region-close {
    right: -2px;
    left: auto;
}

.node {
    position: absolute;
    border-radius: 4px;
    background: #303030;
    box-shadow: 0 1px 4px #0009;
    color: #e6e6e6;
    font-size: 11px;
    line-height: 16px;
}

.node h2 {
    display: flex;
    align-items: center;
    gap: 4px;
    height: 20px;
    padding: 0 8px 0 9px;
    border-radius: 4px 4px 0 0;
}

.node h2 .big {
    margin-left: auto;
}

.node .chev {
    width: 10px;
    height: 10px;
}

.render-layers {
    top: 146px;
    left: 45px;
    width: 235px;
    height: 125px;
}

.render-layers h2 {
    margin-bottom: 3px;
    background: #83314a;
}

.socket {
    height: 22px;
    padding: 3px 11px;
}

.socket.out {
    text-align: right;
}

.node-fields {
    display: grid;
    gap: 6px;
    padding: 9px 11px;
}

.file-output {
    top: 130px;
    left: 386px;
    width: 410px;
    height: 99px;
    border: 1px solid #e8e8e8;
    background: #36349a;
}

.file-output h2 {
    background: #303030;
}

.file-output label {
    display: block;
    padding: 8px 10px 7px;
}

.file-output .field {
    margin: 0 11px 0 10px;
}

.file-output .socket {
    padding: 5px 10px;
}

.file-output .socket span {
    margin-left: 18px;
    color: #9d9cc0;
}

.node .field,
.node .raised,
.node .type {
    height: 18px;
}

.node .raised {
    width: 19px;
    border-radius: 0;
}

.node .type {
    width: 29px;
    border-right: 1px solid #3a3a3a;
    border-radius: 0;
}

.node .field input,
.node .field select {
    padding-left: 7px;
}

.links {
    position: absolute;
    top: 0;
    left: 0;
    overflow: visible;
    fill: none;
}

.link {
    stroke: #e4e4a8;
    stroke-width: 2;
}

.link-edge {
    stroke: #141414;
    stroke-width: 4;
}

.links circle {
    stroke: #161616;
}

.links .color {
    fill: #c7c729;
}

.links .value {
    fill: #a1a1a1;
}

.scroll-x,
.scroll-y {
    position: absolute;
    border-radius: 2px;
    background: #343434;
}

.scroll-x {
    right: 6px;
    bottom: 1px;
    left: 7px;
    height: 2px;
}

.scroll-y {
    top: 8px;
    right: 2px;
    bottom: 6px;
    width: 2px;
}

/* sidebar and panels */
.sidebar {
    width: 214px;
    padding: 0 5px 0 6px;
    overflow: hidden;
    background: #303030;
}

.panel {
    margin-bottom: 1px;
    border-radius: 3px;
    background: #3d3d3d;
}

.panel.scrolled {
    margin-top: -8px;
}

.scrolled .body {
    padding-bottom: 6px;
}

.scrolled .wide {
    margin-bottom: 7px;
}

.panel h3,
.sub {
    display: flex;
    align-items: center;
    gap: 3px;
    height: 18px;
    padding: 0 3px 0 4px;
}

.panel h3 .small,
.sub .small {
    color: #b0b0b0;
}

.panel .tail,
.panel .grip {
    margin-left: auto;
    color: #b0b0b0;
}

.panel .tail + .grip {
    margin-left: 5px;
}

.panel .grip {
    color: #707070;
}

.sub {
    padding-left: 14px;
}

.sub .tail {
    margin-right: 17px;
}

.body {
    display: grid;
    gap: 5px;
    padding: 6px 7px 7px 6px;
}

.group {
    display: grid;
    gap: 2px;
}

.group.tight {
    gap: 1px;
}

.group.loose {
    gap: 3px;
}

.row {
    display: grid;
    grid-template-columns: 73px minmax(0, 1fr);
    column-gap: 7px;
    align-items: center;
    height: 13px;
}

.row > :first-child {
    justify-self: end;
}

.row.name {
    grid-template-columns: 40px minmax(0, 1fr);
}

.row.name > :first-child {
    justify-self: start;
}

.break {
    margin-top: 6px;
}

.num {
    width: 100%;
    height: 13px;
    border-radius: 2px;
    background: #545454;
    text-align: center;
}

.tight .num {
    border-radius: 0;
}

.field {
    display: flex;
    align-items: center;
    height: 13px;
    overflow: hidden;
    border-radius: 3px;
    background: #1d1d1d;
}

.field.dark {
    background: #282828;
}

.field > .icon {
    margin-left: 2px;
}

.field > .chev {
    margin-right: 2px;
}

.field input,
.field select {
    flex: 1;
    padding-left: 4px;
}

.wide {
    display: grid;
    grid-template-columns: 11px 1fr;
    align-items: center;
    height: 13px;
    padding: 0 3px;
    border-radius: 2px;
    background: #545454;
}

.seg {
    display: flex;
    gap: 1px;
    overflow: hidden;
    border-radius: 2px;
}

.seg label {
    flex: 1;
    background: #545454;
    text-align: center;
}

.seg label:has(:checked) {
    background: #4772b3;
    color: #fff;
}

.seg input {
    position: absolute;
    width: 0;
    height: 0;
}

.check {
    display: flex;
    align-items: center;
    gap: 3px;
    height: 13px;
}

.check input {
    width: 9px;
    height: 9px;
    border-radius: 2px;
    background: #545454;
}

.check input:checked {
    display: grid;
    place-content: center;
    background: #4772b3;
}

.check input:checked::before,
.mark:checked::before {
    content: "";
    width: 6px;
    height: 3px;
    margin-bottom: 2px;
    border: solid #fff;
    border-width: 0 0 1px 1px;
    transform: rotate(-45deg);
}

.check.disabled {
    color: #7c7c7c;
}

.check.disabled input {
    background: #464646;
}

.slots,
.split {
    display: grid;
    grid-template-columns: minmax(0, 1fr) 12px;
    column-gap: 7px;
}

.list {
    display: flex;
    flex-direction: column;
    justify-content: space-between;
    height: 84px;
    padding: 4px 4px 1px 3px;
    border-radius: 3px;
    background: #2b2b2b;
}

.list .item {
    height: 12px;
    overflow: hidden;
    border-radius: 2px;
    background: #4772b3;
    color: #fff;
    line-height: 12px;
    text-align: left;
}

.list-foot {
    display: grid;
    grid-template-columns: 83px 1fr;
    align-items: center;
    padding-left: 2px;
}

.movers {
    display: grid;
    align-content: start;
    gap: 1px;
}

.movers button {
    height: 13px;
    border-radius: 2px;
    background: #545454;
}

.movers .icon {
    display: block;
    width: 9px;
    height: 9px;
    margin: 0 auto;
}

.text {
    height: 13px;
    padding-left: 5px;
    border-radius: 3px;
    background: #1d1d1d;
}

.side-tabs {
    display: flex;
    flex-direction: column;
    gap: 3px;
    width: 14px;
    padding: 3px 2px 0 0;
    background: #1b1b1b;
    color: #b4b4b4;
}

.side-tabs button {
    width: 12px;
    padding: 5px 0;
    border: 1px solid #303030;
    border-left: 0;
    border-radius: 0 3px 3px 0;
    background: #1d1d1d;
    line-height: 11px;
    writing-mode: vertical-rl;
}

.side-tabs .active {
    background: #303030;
    color: #fff;
}

/* 3D viewport */
.viewport {
    position: relative;
    flex: 250 1 0;
}

.world {
    position: absolute;
    width: 100%;
    height: 100%;
}

.viewport .header {
    position: relative;
    background: #303030d0;
}

.start {
    display: flex;
    flex: 0 0 42%;
    align-items: center;
    gap: 5px;
    margin-right: -5px;
}

.mode {
    width: 76px;
}

.orient {
    width: 54px;
}

.shading button {
    width: 14px;
}

.joined.shading .flat {
    border-radius: 0;
}

.viewport .region-open,
.viewport .region-close {
    top: 28px;
}

.stats {
    position: relative;
    padding: 6px 7px;
    color: #fff;
    font-weight: 500;
    text-shadow: 0 0 2px #000;
}

.cursor-white,
.cursor-red {
    fill: none;
    stroke: #eee;
    stroke-width: 1.3;
    stroke-dasharray: 3 3;
}

.cursor-red {
    stroke: #e2454b;
    stroke-dashoffset: 3;
}

.nav-gizmo {
    position: absolute;
    top: 24px;
    right: 6px;
    width: 60px;
    height: 60px;
    font-size: 8px;
    font-weight: 600;
    text-anchor: middle;
}

.nav-buttons {
    position: absolute;
    top: 83px;
    right: 6px;
    display: grid;
    gap: 2px;
}

.nav-buttons button {
    display: grid;
    place-content: center;
    width: 20px;
    height: 20px;
    border-radius: 50%;
    background: #2a2a2a;
}

.nav-buttons .icon {
    width: 13px;
    height: 13px;
}

/* timeline */
.timeline .header {
    padding-right: 8px;
}

.timeline .start {
    flex-basis: 44%;
    margin-right: -3px;
}

.timeline .menus button:has(svg) {
    gap: 4px;
    margin-right: -4px;
}

.transport button {
    width: 14px;
    border-right: 1px solid #3d3d3d;
}

.num.frame {
    width: 52px;
}

.range {
    display: flex;
    width: 60px;
    height: 13px;
    margin-left: 1px;
    padding: 0 10px;
    background: #545454;
}

.range input {
    flex: 1;
    width: 10px;
    text-align: right;
}

/* outliner */
.outliner {
    height: 120px;
    background: #282828;
}

.outliner .header {
    background: #303030;
}

.search {
    display: flex;
    align-items: center;
    gap: 4px;
    width: 83px;
    height: 13px;
    padding-left: 2px;
    border-radius: 3px;
    background: #1d1d1d;
}

.search input {
    width: 60px;
}

.search input::placeholder {
    color: #6c6c6c;
}

.outliner .search {
    margin-left: 8px;
}

.tree {
    padding-top: 1px;
}

.tree li {
    display: flex;
    align-items: center;
    gap: 4px;
    height: 14px;
    padding-right: 8px;
}

.tree li:nth-child(even) {
    background: #2b2b2b;
}

.tree .root,
.tree .branch {
    padding-left: 16px;
}

.tree .leaf {
    gap: 5px;
    padding-left: 31px;
}

.tree li.selected {
    background: #334d80;
}

.tree .lit {
    width: 13px;
    height: 13px;
    margin: 0 -1px;
    padding: 1px;
    border-radius: 3px;
    background: #545454;
}

.tree .data {
    margin-left: 9px;
}

.selected {
    color: #ffa028;
}

.toggles {
    display: flex;
    align-items: center;
    gap: 4px;
    margin-left: auto;
    color: #e0e0e0;
}

.mark {
    display: grid;
    place-content: center;
    width: 8px;
    height: 8px;
    margin-right: 1px;
    border-radius: 1px;
    background: #e8e8e8;
}

.mark:checked::before {
    border-color: #222;
}

/* properties */
.properties {
    flex: 1;
}

.properties .search {
    margin: 0 auto 0 42px;
}

.props-body {
    display: flex;
    flex: 1;
    min-height: 0;
}

.prop-tabs {
    display: flex;
    flex-direction: column;
    width: 20px;
    padding: 4px 0 0 2px;
    background: #1b1b1b;
    color: #bdbdbd;
}

.prop-tabs button {
    display: grid;
    place-content: center;
    height: 20px;
    border-radius: 3px 0 0 3px;
}

.prop-tabs .apart {
    margin-top: 6px;
}

.prop-tabs .active {
    background: #303030;
    color: #fff;
}

.props-main {
    flex: 1;
    padding: 0 6px;
}

.context {
    display: flex;
    align-items: center;
    gap: 6px;
    height: 27px;
    padding: 0 0 1px 2px;
}

.context .dim {
    margin-left: auto;
}

/* status bar */
.status {
    display: flex;
    align-items: center;
    height: 14px;
    padding: 0 9px 0 7px;
    color: #9a9a9a;
}

.hint {
    display: flex;
    align-items: center;
    gap: 2px;
    width: 150px;
}

.info {
    margin-left: auto;
}
```
